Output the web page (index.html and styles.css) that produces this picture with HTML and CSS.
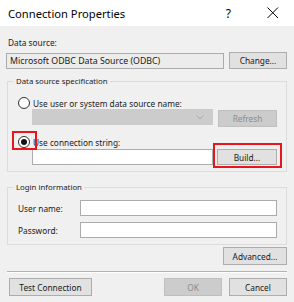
FILE: index.html
```html
<!DOCTYPE html>
<html lang="en">
<head>
    <meta charset="UTF-8">
    <title>Connection Properties</title>
    <link rel="stylesheet" href="styles.css">
</head>
<body>
    <div class="titlebar">
        <span class="title">Connection Properties</span>
        <span class="help">?</span>
        <svg class="close" width="12" height="12" viewBox="0 0 12 12">
            <path d="M0.5 0.5 L11 11 M11 0.5 L0.5 11" stroke="#000" stroke-width="1" fill="none"/>
        </svg>
    </div>

    <div class="dialog">
        <div class="label">Data source:</div>
        <div class="row source-row">
            <div class="textbox readonly">Microsoft ODBC Data Source (ODBC)</div>
            <button class="btn change">Change...</button>
        </div>

        <fieldset class="group spec">
            <legend>Data source specification</legend>
            <div class="radio-row">
                <span class="radio"></span>
                <span>Use user or system data source name:</span>
            </div>
            <div class="row indent dsn-row">
                <div class="combo">
                    <svg width="8" height="5" viewBox="0 0 8 5"><path d="M0.5 0.5 L4 4 L7.5 0.5" stroke="#a8a8a8" fill="none"/></svg>
                </div>
                <button class="btn disabled refresh">Refresh</button>
            </div>
            <div class="radio-row second">
                <span class="radio checked"></span>
                <span>Use connection string:</span>
                <span class="mark mark-radio"></span>
            </div>
            <div class="row indent conn-row">
                <div class="textbox conn"></div>
                <button class="btn build">Build...<span class="mark mark-build"></span></button>
            </div>
        </fieldset>

        <fieldset class="group login">
            <legend>Login information</legend>
            <div class="field">
                <span class="field-label">User name:</span>
                <div class="textbox"></div>
            </div>
            <div class="field">
                <span class="field-label">Password:</span>
                <div class="textbox"></div>
            </div>
        </fieldset>

        <div class="advanced-row">
            <button class="btn advanced">Advanced...</button>
        </div>

        <div class="separator"></div>

        <div class="footer">
            <button class="btn test">Test Connection</button>
            <div class="footer-right">
                <button class="btn disabled ok">OK</button>
                <button class="btn cancel">Cancel</button>
            </div>
        </div>
    </div>
</body>
</html>
```

FILE: styles.css
```css
body {
    margin: 0;
    width: 294px;
    height: 302px;
    background-color: #f0f0f0;
    font-family: 'Noto Sans', sans-serif;
    font-size: 8.3px;
    color: #1a1a1a;
    overflow: hidden;
}

.titlebar {
    height: 26px;
    background-color: #fff;
    display: flex;
    align-items: center;
}

.title {
    margin-left: 8px;
    font-size: 11.2px;
    color: #000;
    flex: 1;
}

.help {
    font-size: 12px;
    color: #000;
    margin-right: 36px;
}

.close {
    margin-right: 15px;
}

.dialog {
    padding: 11px 7px 0 7px;
}

.label {
    line-height: 12px;
    margin-left: 1px;
}

.row {
    display: flex;
    align-items: center;
    justify-content: space-between;
}

.source-row {
    margin-top: 3px;
}

.textbox {
    height: 14px;
    background-color: #fff;
    border: 1px solid #ababab;
    line-height: 14px;
    padding-left: 3px;
    box-sizing: content-box;
}

.textbox.readonly {
    width: 213px;
    background-color: #ececec;
    margin-left: -1px;
    font-size: 8.8px;
}

.btn {
    font-family: inherit;
    font-size: 8.3px;
    color: #1a1a1a;
    background-color: #e1e1e1;
    border: 1px solid #adadad;
    padding: 0;
    height: 18px;
    position: relative;
}

.btn.disabled {
    background-color: #cccccc;
    border-color: #bfbfbf;
    color: #8c8c8c;
}

.change {
    width: 58px;
    height: 17px;
}

.group {
    margin: 6px 0 0 0;
    border: 1px solid #dcdcdc;
    padding: 10px 9px 6px 10px;
}

.group legend {
    margin-left: -4px;
    padding: 0 2px;
    line-height: 12px;
    font-size: 7.8px;
}

.radio-row {
    display: flex;
    align-items: center;
    height: 12px;
    gap: 3px;
    position: relative;
}

.radio-row.second {
    margin-top: 9px;
}

.radio {
    width: 10px;
    height: 10px;
    border: 1px solid #333;
    border-radius: 50%;
    background-color: #fff;
    display: flex;
    align-items: center;
    justify-content: center;
}

.radio.checked::after {
    content: '';
    width: 6px;
    height: 6px;
    border-radius: 50%;
    background-color: #111;
}

.indent {
    margin-left: 14px;
}

.dsn-row {
    align-items: flex-start;
}

.combo {
    width: 181px;
    height: 16px;
    background-color: #cccccc;
    display: flex;
    align-items: center;
    justify-content: flex-end;
    padding-right: 9px;
    box-sizing: border-box;
}

.refresh {
    width: 59px;
    height: 17px;
    margin-top: 1px;
}

.conn-row {
    margin-top: 1px;
}

.textbox.conn {
    width: 176px;
}

.build {
    width: 60px;
    height: 16px;
}

.mark {
    position: absolute;
    border: 2px solid #e8151b;
}

.mark-radio {
    left: -6px;
    top: -5px;
    width: 21px;
    height: 15px;
}

.mark-build {
    left: -5px;
    top: -7px;
    width: 65px;
    height: 21px;
}

.login {
    margin-top: 9px;
    padding: 7px 9px 6px 10px;
}

.field {
    display: flex;
    align-items: center;
}

.field + .field {
    margin-top: 6px;
}

.field-label {
    width: 62px;
}

.field .textbox {
    flex: 1;
}

.advanced-row {
    display: flex;
    justify-content: flex-end;
    margin-top: 2px;
}

.advanced {
    width: 64px;
}

.separator {
    margin-top: 6px;
    height: 1px;
    background-color: #b4b4b4;
    border-bottom: 1px solid #fff;
}

.footer {
    margin-top: 5px;
    display: flex;
    justify-content: space-between;
}

.test {
    width: 83px;
    margin-left: 2px;
}

.footer-right {
    display: flex;
    gap: 7px;
}

.ok,
.cancel {
    width: 58px;
}
```
